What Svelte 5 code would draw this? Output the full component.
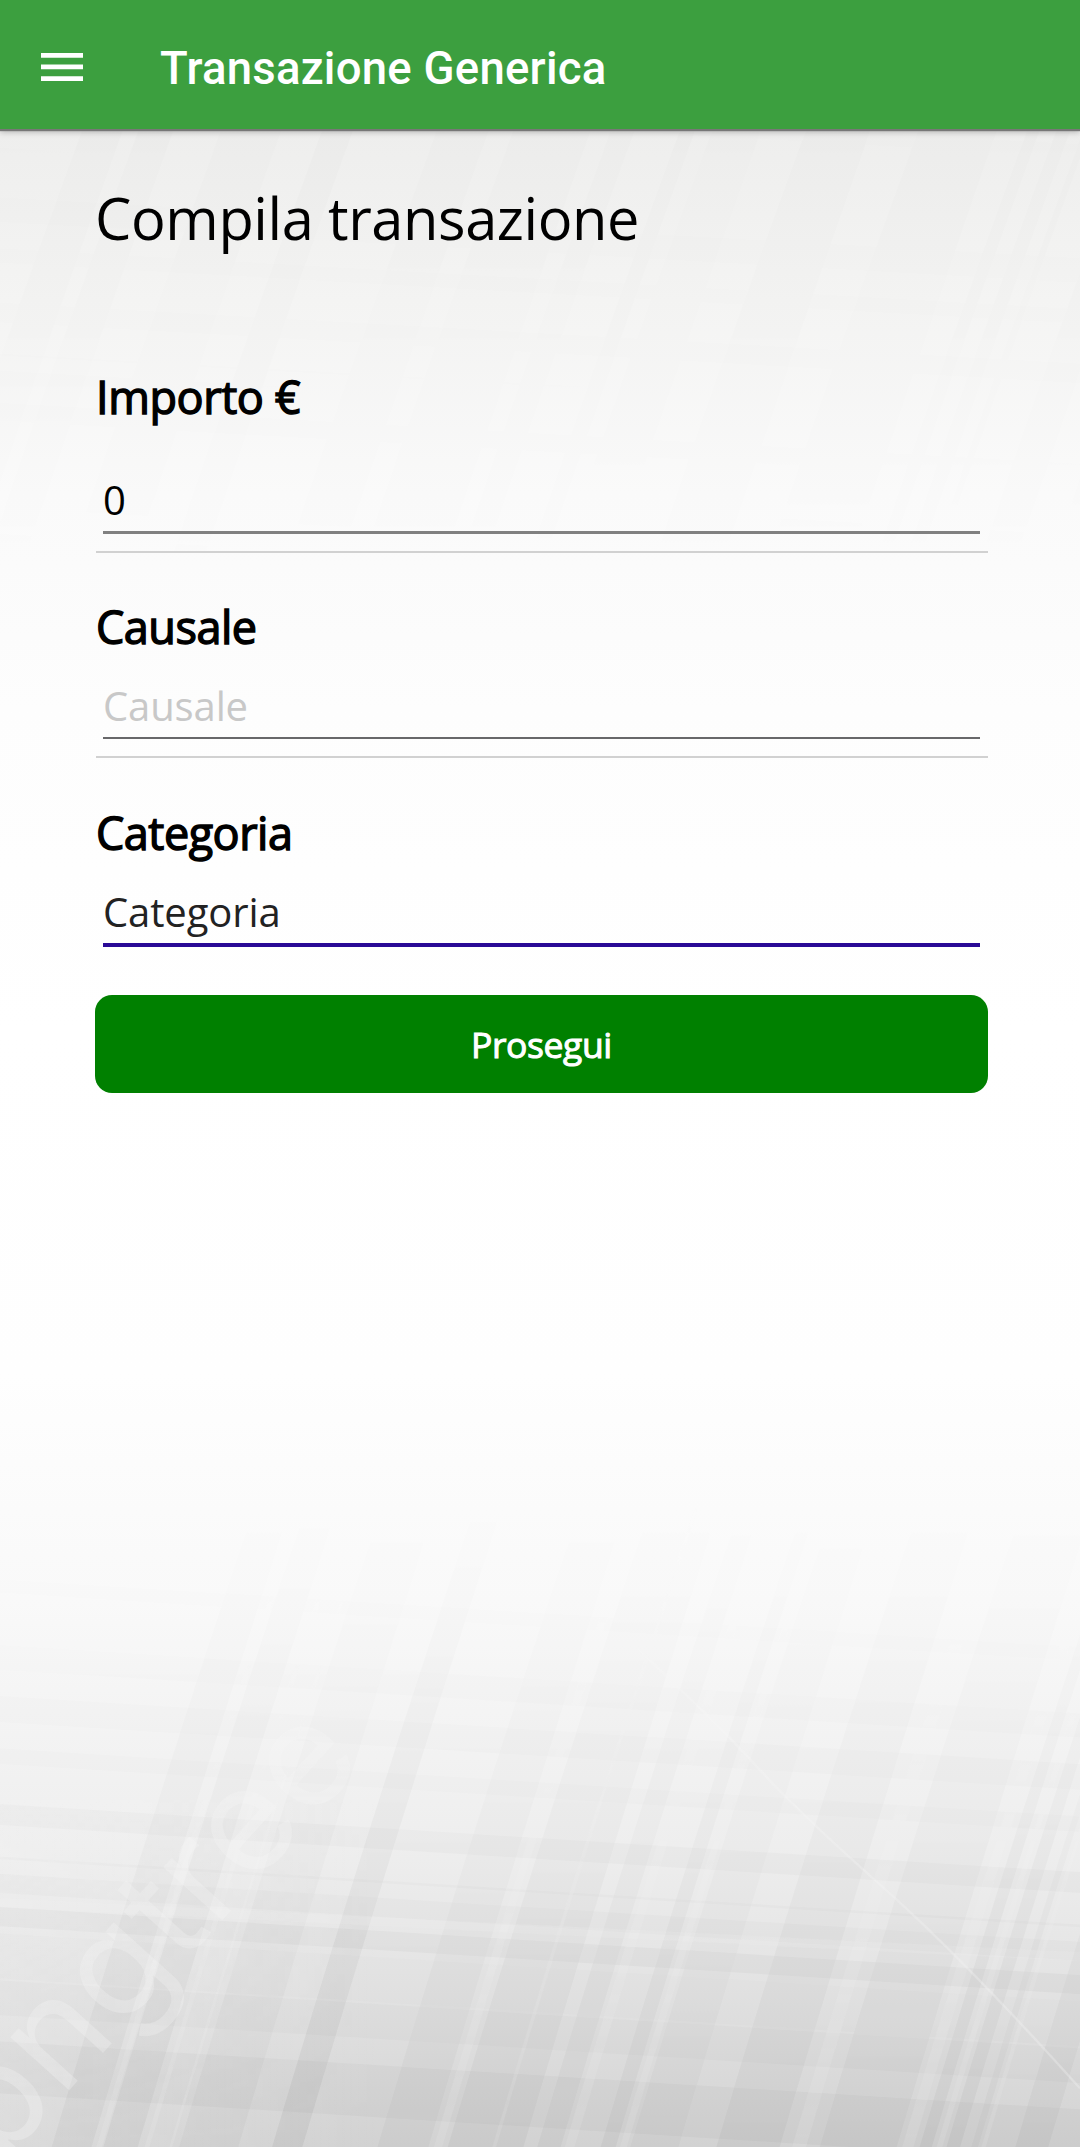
<script>
  let amount = $state('0');
  let reason = $state('');
  let category = $state('Categoria');

  // Steep stripes of the backdrop: [left edge at the bottom, width, opacity]
  const steep = [
    [75, 58, 0.036], [150, 50, 0.04], [260, 86, 0.028], [395, 44, 0.05],
    [548, 74, 0.028], [650, 110, 0.034], [780, 34, 0.032], [872, 22, 0.036],
    [915, 70, 0.025], [1040, 92, 0.036], [1190, 112, 0.032], [1335, 18, 0.04],
    [1374, 20, 0.04], [1410, 10, 0.028], [1474, 48, 0.036], [1570, 60, 0.028],
    [1660, 26, 0.032], [1720, 70, 0.02]
  ];
  const glints = [[140, 8], [210, 7], [246, 4], [630, 12], [715, 5], [820, 14], [900, 10], [1150, 20], [1310, 16], [1360, 8], [1425, 6]];
  // Cross bands: [top at the left edge, height, opacity]
  const cross = [
    [-60, 40, 0.015], [130, 70, 0.018], [275, 75, 0.025], [425, 45, 0.02], [585, 60, 0.03],
    [735, 8, 0.025], [785, 55, 0.025], [880, 55, 0.035], [955, 130, 0.012], [1090, 100, 0.02], [1265, 150, 0.028]
  ];
  const steepPath = (x, w) => `M${x} 1568L${x + w} 1568Q${x + w + 130} 700 ${x + w * 0.9 + 300} -300L${x + 300} -300Q${x + 130} 700 ${x} 1568Z`;
  const crossPath = (y, h) => `M0 ${y}L1568 ${y + 195}L1568 ${y + 195 + h}L0 ${y + h}Z`;
</script>

<div class="screen">
  <svg class="backdrop" viewBox="0 0 1080 2147" preserveAspectRatio="none" aria-hidden="true">
    <defs>
      <linearGradient id="base" x1="0" y1="0" x2="0" y2="1">
        <stop offset="0.06" stop-color="#eeeeed" />
        <stop offset="0.14" stop-color="#f4f4f3" />
        <stop offset="0.23" stop-color="#fafafa" />
        <stop offset="0.33" stop-color="#fdfdfd" />
        <stop offset="0.48" stop-color="#fff" />
        <stop offset="0.64" stop-color="#fefefe" />
        <stop offset="0.745" stop-color="#f9f9f9" />
        <stop offset="0.86" stop-color="#eeeeee" />
        <stop offset="0.93" stop-color="#e2e2e2" />
        <stop offset="1" stop-color="#d2d2d2" />
      </linearGradient>
      <linearGradient id="fade" x1="0" y1="0" x2="0" y2="1">
        <stop offset="0" stop-color="#000" />
        <stop offset="0.3" stop-color="#555" />
        <stop offset="0.7" stop-color="#bbb" />
        <stop offset="1" stop-color="#fff" />
      </linearGradient>
      <linearGradient id="leftGlow" x1="0" y1="0" x2="1" y2="0">
        <stop offset="0" stop-color="#fff" stop-opacity="0.2" />
        <stop offset="0.35" stop-color="#fff" stop-opacity="0" />
      </linearGradient>
      <linearGradient id="fadeTop" x1="0" y1="0" x2="0" y2="1">
        <stop offset="0" stop-color="#888" />
        <stop offset="1" stop-color="#000" />
      </linearGradient>
      <mask id="lower" maskUnits="userSpaceOnUse" x="0" y="1500" width="1080" height="647">
        <rect x="0" y="1500" width="1080" height="647" fill="url(#fade)" />
      </mask>
      <mask id="upper" maskUnits="userSpaceOnUse" x="0" y="120" width="1080" height="500">
        <rect x="0" y="120" width="1080" height="500" fill="url(#fadeTop)" />
      </mask>
    </defs>
    <rect width="1080" height="2147" fill="url(#base)" />
    <g mask="url(#upper)">
      <g transform="translate(-60 100) scale(0.75 0.34)">
        {#each steep as [x, w, o]}
          <path d={steepPath(x - 120, w)} fill-opacity={o * 0.5} />
        {/each}
        {#each cross as [y, h, o]}
          <path d={crossPath(y, h)} fill-opacity={o * 0.3} />
        {/each}
      </g>
    </g>
    <g mask="url(#lower)">
      <rect y="1800" width="1080" height="347" fill="url(#leftGlow)" />
      <g transform="translate(0 1600) scale(0.6888 0.34885)">
        {#each steep as [x, w, o]}
          <path d={steepPath(x, w)} fill-opacity={o} />
        {/each}
        {#each cross as [y, h, o]}
          <path d={crossPath(y, h)} fill-opacity={o} />
        {/each}
        {#each glints as [x, w]}
          <path class="light" d={steepPath(x, w)} />
        {/each}
        <path class="light" d="M0 855L1568 1010L1568 1035L0 880Z" />
        <path class="streak" d="M920 130Q1040 350 1100 480T1280 820T1568 1400" />
      </g>
      <text class="watermark" transform="translate(1 2166) rotate(-48)" textLength="545">pngtree</text>
    </g>
  </svg>

  <header class="bar">
    <button class="menu" aria-label="Menu">
      <svg width="42" height="28" viewBox="0 0 42 28"><path d="M0 0h42v4.7H0zM0 11.6h42v4.7H0zM0 23.2h42v4.7H0z" /></svg>
    </button>
    <h1>Transazione Generica</h1>
  </header>

  <main>
    <h2>Compila transazione</h2>
    <label class="first" for="amount">Importo €</label>
    <input id="amount" class="amount" bind:value={amount} />
    <hr />
    <label for="reason">Causale</label>
    <input id="reason" placeholder="Causale" bind:value={reason} />
    <hr />
    <label for="category">Categoria</label>
    <input id="category" class="active" bind:value={category} />
    <button class="submit">Prosegui</button>
  </main>
</div>

<style>
  :global(body) { background: #fff; }
  .screen {
    position: relative;
    height: 2147px;
    overflow: hidden;
    font-family: "Open Sans", "Noto Sans", sans-serif;
    color: #000;
  }
  .backdrop { position: absolute; inset: 0; width: 100%; height: 100%; }
  .light { fill: #fff; fill-opacity: 0.1; }
  .streak { fill: none; stroke: #fff; stroke-opacity: 0.25; stroke-width: 4; }
  .watermark { font: 145px Inter, sans-serif; fill: #fff; fill-opacity: 0.25; }
  .bar {
    position: relative;
    box-sizing: border-box;
    height: 129px;
    padding: 5px 41px 0;
    display: flex;
    align-items: center;
    gap: 77px;
    background: #3c9f3f;
    box-shadow: 0 2px 1px #777, 0 3px 6px rgba(0, 0, 0, 0.25);
  }
  .menu { display: flex; padding: 0; border: 0; background: none; }
  .menu path { fill: #fff; }
  h1 {
    margin: 3px 0 0;
    font: 500 45.5px/60px Roboto, sans-serif;
    letter-spacing: 0.25px;
    color: #fff;
    white-space: nowrap;
  }
  main {
    position: relative;
    display: flex;
    flex-direction: column;
    padding: 49px 92px 0 96px;
  }
  h2 {
    margin: 0 0 0 -1px;
    font-size: 57.75px;
    line-height: 80px;
    font-weight: 400;
    letter-spacing: -0.4px;
  }
  label {
    margin-top: 45px;
    margin-bottom: -24px;
    font-size: 45px;
    line-height: 60px;
    letter-spacing: -0.5px;
    -webkit-text-stroke: 1.4px #000;
  }
  label.first { margin-top: 109px; margin-bottom: -1px; letter-spacing: -0.4px; }
  .amount + hr + label { margin-top: 44px; }
  input {
    box-sizing: border-box;
    height: 62px;
    margin: 44px 8px 0 7px;
    padding: 0 0 4px;
    border: 0;
    border-bottom: 2px solid #68686a;
    border-radius: 0;
    background: none;
    outline: none;
    font: 40px/56px "Open Sans", "Noto Sans", sans-serif;
    letter-spacing: -0.12px;
    color: #000;
  }
  input::placeholder { color: #c8c8c8; opacity: 1; }
  .amount { height: 64px; padding-bottom: 3px; border-bottom: 3px solid #808080; }
  .active { height: 64px; border-bottom: 4px solid #2a0a96; color: #222; }
  hr { width: 100%; height: 2px; margin: 17px 0 0; border: 0; background: #d1d1d1; }
  .submit {
    height: 98px;
    margin: 48px 0 0 -1px;
    padding: 0 0 1px;
    border: 0;
    border-radius: 17px;
    background: #008000;
    color: #fff;
    font: 35.5px/50px "Open Sans", "Noto Sans", sans-serif;
    letter-spacing: -0.4px;
    -webkit-text-stroke: 1px #fff;
  }
</style>
